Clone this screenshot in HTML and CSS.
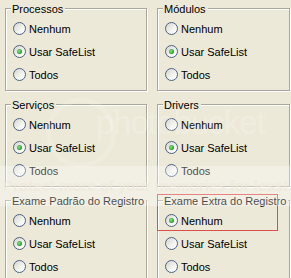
FILE: index.html
```html
<!DOCTYPE html>
<html lang="pt">
<head>
    <meta charset="UTF-8">
    <title>SafeList</title>
    <link rel="stylesheet" href="styles.css">
</head>
<body>
    <div class="panel">
        <div class="group">
            <span class="title">Processos</span>
            <div class="options">
                <label class="opt"><span class="radio"></span>Nenhum</label>
                <label class="opt"><span class="radio checked"></span>Usar SafeList</label>
                <label class="opt"><span class="radio"></span>Todos</label>
            </div>
        </div>
        <div class="group">
            <span class="title">Módulos</span>
            <div class="options">
                <label class="opt"><span class="radio"></span>Nenhum</label>
                <label class="opt"><span class="radio checked"></span>Usar SafeList</label>
                <label class="opt"><span class="radio"></span>Todos</label>
            </div>
        </div>
        <div class="group">
            <span class="title">Serviços</span>
            <div class="options">
                <label class="opt"><span class="radio"></span>Nenhum</label>
                <label class="opt"><span class="radio checked"></span>Usar SafeList</label>
                <label class="opt"><span class="radio"></span>Todos</label>
            </div>
        </div>
        <div class="group">
            <span class="title">Drivers</span>
            <div class="options">
                <label class="opt"><span class="radio"></span>Nenhum</label>
                <label class="opt"><span class="radio checked"></span>Usar SafeList</label>
                <label class="opt"><span class="radio"></span>Todos</label>
            </div>
        </div>
        <div class="group">
            <span class="title">Exame Padrão do Registro</span>
            <div class="options">
                <label class="opt"><span class="radio"></span>Nenhum</label>
                <label class="opt"><span class="radio checked"></span>Usar SafeList</label>
                <label class="opt"><span class="radio"></span>Todos</label>
            </div>
        </div>
        <div class="group">
            <span class="title">Exame Extra do Registro</span>
            <div class="options">
                <label class="opt"><span class="radio checked"></span>Nenhum</label>
                <label class="opt"><span class="radio"></span>Usar SafeList</label>
                <label class="opt"><span class="radio"></span>Todos</label>
            </div>
            <div class="mark"></div>
        </div>
    </div>

    <!-- watermark from the image host -->
    <div class="watermark">
        <div class="wm-ring"></div>
        <div class="wm-logo">photobucket</div>
        <div class="wm-band">Protect more of your memories for less!</div>
    </div>
</body>
</html>
```

FILE: styles.css
```css
html, body {
    margin: 0;
    overflow: hidden;
    height: 278px;
}

body {
    background-color: #ece9d8;
    font-family: "Liberation Sans", Arial, sans-serif;
    font-size: 11px;
    color: #000;
    position: relative;
}

.panel {
    display: grid;
    grid-template-columns: 142px 133px;
    column-gap: 10px;
    row-gap: 13px;
    padding: 8px 0 0 5px;
}

.group {
    position: relative;
    height: 83px;
    box-sizing: border-box;
    border: 1px solid #aca899;
    box-shadow: 1px 1px 0 #fff, inset 1px 1px 0 #fff;
    padding: 0 0 0 6px;
}

.title {
    display: block;
    width: max-content;
    margin: -6px 0 0 -1px;
    padding: 0 2px 0 1px;
    line-height: 13px;
    background-color: #ece9d8;
}

.options {
    margin-top: 1px;
}

.opt {
    display: flex;
    align-items: center;
    gap: 3px;
    height: 23px;
    padding-left: 1px;
}

.radio {
    width: 13px;
    height: 13px;
    box-sizing: border-box;
    border-radius: 50%;
    border: 1px solid #4c6383;
    background: linear-gradient(135deg, #d6d6ce 0%, #f4f4f0 60%, #fff 100%);
    position: relative;
    flex: none;
}

.radio.checked::after {
    content: "";
    position: absolute;
    left: 3px;
    top: 3px;
    width: 5px;
    height: 5px;
    border-radius: 50%;
    background: radial-gradient(circle at 40% 40%, #8ce08c 0%, #2aa82a 60%, #1c861c 100%);
}

.mark {
    position: absolute;
    left: -1px;
    top: -7px;
    width: 119px;
    height: 35px;
    border: 1px solid #d9504a;
}

.watermark {
    position: absolute;
    left: 0;
    top: 0;
    width: 291px;
    height: 278px;
    pointer-events: none;
}

.wm-ring {
    position: absolute;
    left: 46px;
    top: 98px;
    width: 60px;
    height: 60px;
    border-radius: 50%;
    border: 5px solid rgba(255, 255, 255, 0.16);
}

.wm-logo {
    position: absolute;
    left: 96px;
    top: 104px;
    font-family: "Liberation Sans", Arial, sans-serif;
    font-size: 33px;
    letter-spacing: -1px;
    color: rgba(255, 255, 255, 0.2);
}

.wm-band {
    position: absolute;
    left: 0;
    top: 166px;
    width: 291px;
    height: 40px;
    line-height: 40px;
    text-align: center;
    background-color: rgba(255, 255, 255, 0.3);
    font-weight: bold;
    font-size: 15px;
    color: rgba(236, 233, 216, 0.6);
    white-space: nowrap;
}
```
